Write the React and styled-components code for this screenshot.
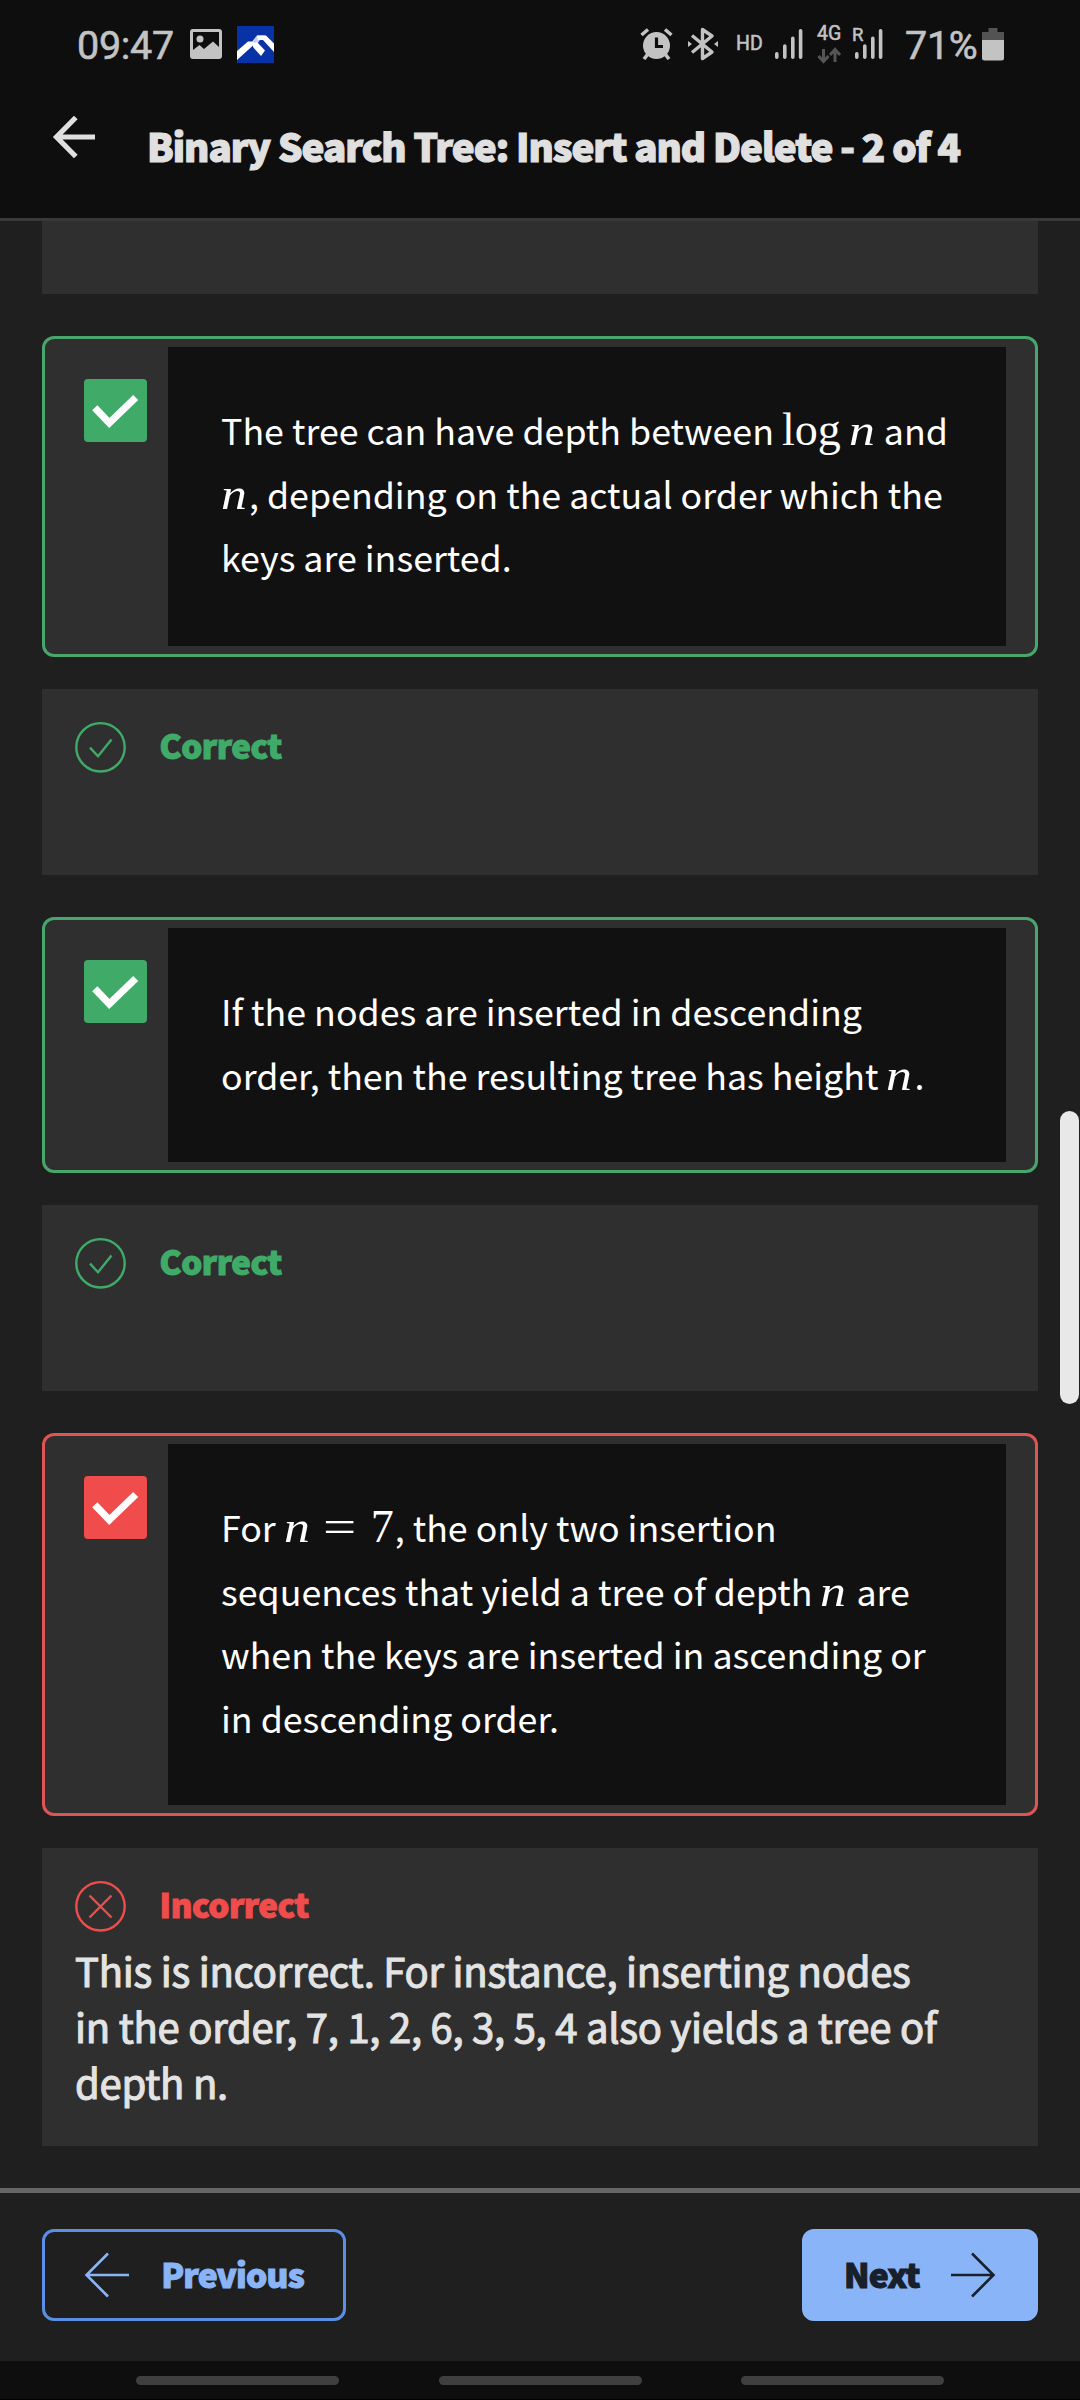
import React from "react";
import styled, { createGlobalStyle } from "styled-components";

const SANS = '"Noto Sans CJK SC", "Noto Sans", sans-serif';

const Global = createGlobalStyle`
  *, *::before, *::after { box-sizing: border-box; }
  html, body { margin: 0; background: #1f1f1f; }
  svg { display: block; flex: none; }
`;

const Screen = styled.div`
  position: relative;
  width: 1080px;
  height: 2400px;
  overflow: hidden;
  display: flex;
  flex-direction: column;
  background: #1f1f1f;
  font-family: ${SANS};
`;

const StatusBar = styled.div`
  height: 88px;
  flex: none;
  display: flex;
  align-items: center;
  justify-content: space-between;
  padding: 0 76px 0 77px;
  background: #0e0e0e;
  color: #c3c3c3;
  font: 400 39.5px/88px Roboto, sans-serif;
`;

const StatusGroup = styled.div`
  display: flex;
  align-items: center;
  height: 88px;
`;

const StatusText = styled.span`
  width: ${(p) => p.$w}px;
  white-space: nowrap;
  padding-top: ${(p) => p.$drop || 0}px;
  letter-spacing: -0.3px;
  -webkit-text-stroke: 0.6px currentColor;
`;

const SmallLabel = styled.span`
  width: ${(p) => p.$w}px;
  margin-left: ${(p) => p.$ml || 0}px;
  font-size: 19.5px;
  line-height: ${(p) => p.$lh || 86}px;
  white-space: nowrap;
  -webkit-text-stroke: 0.5px currentColor;
`;

const NetworkStack = styled.div`
  display: flex;
  flex-direction: column;
  align-items: center;
  width: 24px;
  margin-left: 14px;
`;

const SignalWrap = styled.div`
  position: relative;
  margin-left: ${(p) => p.$ml}px;
`;

const Roaming = styled.span`
  position: absolute;
  left: -3px;
  top: -5px;
  font-size: 18.5px;
  line-height: 22px;
  -webkit-text-stroke: 0.5px currentColor;
`;

const Gap = styled.span`
  width: ${(p) => p.$w}px;
  flex: none;
`;

const Header = styled.header`
  height: 133px;
  flex: none;
  display: flex;
  padding: 25px 0 0 51px;
  background: #0e0e0e;
  border-bottom: 3px solid #393939;
`;

const BackButton = styled.button`
  width: 96px;
  height: 48px;
  padding: 0;
  border: 0;
  background: none;
`;

const Title = styled.h1`
  margin: 2px 0 0;
  color: #e0e0e0;
  font: 900 38.5px/60px ${SANS};
  letter-spacing: -1px;
  -webkit-text-stroke: 1.2px currentColor;
  white-space: nowrap;
`;

const Content = styled.main`
  flex: none;
  height: 1967px;
  padding: 0 42px;
  display: flex;
  flex-direction: column;
`;

const Answer = styled.section`
  height: ${(p) => p.$h}px;
  flex: none;
  display: flex;
  padding: 8px 29px 8px 39px;
  background: #2f2f2f;
  border: 3px solid ${(p) => p.$line};
  border-radius: 12px;
`;

const CheckCell = styled.div`
  width: 84px;
  flex: none;
  padding-top: 32px;
`;

const CheckBox = styled.div`
  width: 63px;
  height: 63px;
  border-radius: 4px;
  background: ${(p) => p.$fill};
`;

const AnswerText = styled.p`
  flex: 1;
  margin: 0;
  padding: 51px 0 0 53px;
  background: #111;
  color: #fff;
  font: 400 35.75px/63.6px ${SANS};
  white-space: nowrap;
`;

const Line = styled.span`
  display: block;
`;

const MathText = styled.span`
  font-family: "Liberation Serif", serif;
  font-size: 46px;
  line-height: 0;
  margin-right: ${(p) => p.$mr || 0}px;
`;

const MathVar = styled(MathText)`
  display: inline-block;
  width: 27px;
  font-size: 45px;
  font-style: italic;
  transform: scaleX(1.15);
  transform-origin: left;
`;

const MathRelation = styled(MathText)`
  display: inline-block;
  width: 33px;
  transform: scaleX(1.28);
  transform-origin: left;
`;

const Feedback = styled.section`
  height: ${(p) => p.$h}px;
  flex: none;
  margin: ${(p) => p.$mt || 0}px 0 42px;
  padding: 32px;
  background: #2f2f2f;
`;

const Verdict = styled.div`
  display: flex;
  align-items: center;
  height: 52px;
  color: ${(p) => p.$c};
  font: 900 33px/52px ${SANS};
  letter-spacing: -0.4px;
`;

const VerdictLabel = styled.span`
  margin: -4px 0 0 33.6px;
  -webkit-text-stroke: 1.1px currentColor;
`;

const Explanation = styled.p`
  margin: 10px 0 0 1px;
  color: #e3e3e3;
  font: 400 40px/56px ${SANS};
  letter-spacing: -0.24px;
  -webkit-text-stroke: 1.1px currentColor;
  white-space: nowrap;
`;

const Footer = styled.footer`
  height: 173px;
  flex: none;
  display: flex;
  justify-content: space-between;
  padding: 36px 42px 0;
  border-top: 5px solid #666;
`;

const NavButton = styled.button`
  width: ${(p) => p.$w}px;
  height: 92px;
  display: flex;
  align-items: center;
  justify-content: space-between;
  padding: ${(p) => p.$pad};
  border: 3px solid ${(p) => p.$line};
  border-radius: 12px;
  background: ${(p) => p.$bg};
  color: ${(p) => p.$c};
  font: 900 33.5px/84px ${SANS};
  letter-spacing: -0.8px;
`;

const NavLabel = styled.span`
  margin-top: -2px;
  -webkit-text-stroke: 1.1px currentColor;
`;

const SystemNav = styled.nav`
  height: 39px;
  flex: none;
  display: flex;
  justify-content: center;
  gap: 99.5px;
  padding-top: 15px;
  background: #0e0e0e;
  border-bottom: 1px solid #000;
`;

const Pill = styled.span`
  width: 203px;
  height: 9px;
  border-radius: 5px;
  background: #3f3f3f;
`;

const ScrollThumb = styled.div`
  position: absolute;
  right: 1px;
  top: 1111px;
  width: 19px;
  height: 293px;
  border-radius: 10px;
  background: #e8e8e8;
`;

const GREEN = "#40ab68";
const RED = "#f04c4c";

const Bars = () => (
  <svg width="28" height="30" viewBox="0 0 28 30" stroke="#c3c3c3" strokeWidth="3.6" strokeLinecap="round">
    <path d="M1.8 24.8V28.2M9.8 17V28.2M17.8 9.2V28.2M25.6 1.8V28.2" />
  </svg>
);

const Tick = ({ color }) => (
  <CheckBox $fill={color}>
    <svg width="63" height="63" fill="none" stroke="#fff" strokeWidth="7.2">
      <path d="M10.8 28.8L25.3 44L51.7 18.5" />
    </svg>
  </CheckBox>
);

const Option = ({ h, color, line, children }) => (
  <Answer $h={h} $line={line}>
    <CheckCell>
      <Tick color={color} />
    </CheckCell>
    <AnswerText>{children}</AnswerText>
  </Answer>
);

const Result = ({ ok, children, ...rest }) => (
  <Feedback {...rest}>
    <Verdict $c={ok ? GREEN : RED}>
      <svg width="52" height="52" fill="none" stroke="currentColor" strokeWidth="2.4">
        <circle cx="26.5" cy="26.3" r="24.2" />
        {ok ? <path d="M16 26.6L24 35.2L37.5 18.5" /> : <path d="M15.5 15.5L37.5 37.5M37.5 15.5L15.5 37.5" />}
      </svg>
      <VerdictLabel>{ok ? "Correct" : "Incorrect"}</VerdictLabel>
    </Verdict>
    {children}
  </Feedback>
);

export default function App() {
  return (
    <Screen>
      <Global />
      <StatusBar>
        <StatusGroup>
          <StatusText $w={113} $drop={3}>09:47</StatusText>
          <svg width="32" height="30" viewBox="0 0 32 30">
            <path fillRule="evenodd" fill="#c3c3c3" d="M3 0H29Q32 0 32 3V27Q32 30 29 30H3Q0 30 0 27V3Q0 0 3 0ZM3 3V21L9.500 16L14 20L23 12.500L29 18V3Z" />
            <circle cx="10" cy="10" r="3.500" fill="#c3c3c3" />
          </svg>
          <Gap $w={15} />
          <svg width="37" height="37" viewBox="0 0 37 37">
            <rect width="37" height="37" fill="#0733a6" />
            <path d="M0 25L11 15.500H17L20 17L16 19.500L0 34Z" fill="#fff" />
            <path d="M15 15.500L20 9.500H28L23 14L20 18Z" fill="#c6d4f4" />
            <path d="M20 9.500H29L37 17.500V26L26 14H21Z" fill="#fff" />
            <path d="M16 18L20 16L28 24.500L24 30L16 21Z" fill="#fff" />
          </svg>
        </StatusGroup>
        <StatusGroup>
          <svg width="33" height="32" viewBox="0 0 33 32">
            <circle cx="16.500" cy="17.500" r="13.500" fill="#c3c3c3" />
            <path d="M1.500 7L8 1.500M31.500 7L25 1.500M7.500 26.500L4 31M25.500 26.500L29 31" stroke="#c3c3c3" strokeWidth="3.600" />
            <path d="M16.500 9.500V18.500H23" stroke="#0e0e0e" strokeWidth="3.200" fill="none" />
          </svg>
          <Gap $w={15} />
          <svg width="30" height="34" viewBox="0 0 30 34" fill="none" stroke="#c3c3c3" strokeWidth="3.400">
            <path d="M4 8.500L24 25L14.500 31.500V2.500L24 9L4 25.500" strokeLinejoin="round" />
            <path d="M0 14L4 17L0 20ZM30 14L26 17L30 20Z" fill="#c3c3c3" stroke="none" />
          </svg>
          <SmallLabel $w={26} $ml={18}>HD</SmallLabel>
          <SignalWrap $ml={13}><Bars /></SignalWrap>
          <NetworkStack>
            <SmallLabel $w={24} $lh={20}>4G</SmallLabel>
            <svg width="24" height="20" viewBox="0 0 24 20" fill="none" stroke="#555" strokeWidth="3">
              <path d="M6.500 5V17M1.500 12L6.500 17.500L11.500 12M18 18V6M13 11L18 5.500L23 11" />
            </svg>
          </NetworkStack>
          <SignalWrap $ml={14}><Roaming>R</Roaming><Bars /></SignalWrap>
          <Gap $w={22} />
          <StatusText $w={77} $drop={3}>71%</StatusText>
          <svg width="22" height="34" viewBox="0 0 22 34">
            <path d="M6.500 1H15.500V5H22V14H0V5H6.500Z" fill="#535353" />
            <path d="M0 13H22V31Q22 33.500 19.500 33.500H2.500Q0 33.500 0 31Z" fill="#c3c3c3" />
          </svg>
        </StatusGroup>
      </StatusBar>
      <Header>
        <BackButton aria-label="Back">
          <svg width="48" height="48" fill="none" stroke="#e0e0e0" strokeWidth="5.200">
            <path d="M44 24H6M24.800 4.500L5.500 24L24.800 43.500" />
          </svg>
        </BackButton>
        <Title>Binary Search Tree: Insert and Delete - 2 of 4</Title>
      </Header>
      <Content>
        <Feedback $h={73} />
        <Option h={321} color={GREEN} line="#48a66c">
          <Line>The tree can have depth between <MathText $mr={8}>log</MathText><MathVar>n</MathVar> and</Line>
          <Line><MathVar $mr={1}>n</MathVar>, depending on the actual order which the</Line>
          <Line>keys are inserted.</Line>
        </Option>
        <Result ok $h={186} $mt={32} />
        <Option h={256} color={GREEN} line="#48a66c">
          <Line>If the nodes are inserted in descending</Line>
          <Line>order, then the resulting tree has height <MathVar $mr={1}>n</MathVar>.</Line>
        </Option>
        <Result ok $h={186} $mt={32} />
        <Option h={383} color={RED} line="#de5555">
          <Line>For <MathVar $mr={12}>n</MathVar><MathRelation $mr={15}>=</MathRelation><MathText $mr={1}>7</MathText>, the only two insertion</Line>
          <Line>sequences that yield a tree of depth <MathVar $mr={1}>n</MathVar> are</Line>
          <Line>when the keys are inserted in ascending or</Line>
          <Line>in descending order.</Line>
        </Option>
        <Result $h={298} $mt={32}>
          <Explanation>
            <Line>This is incorrect. For instance, inserting nodes</Line>
            <Line>in the order, 7, 1, 2, 6, 3, 5, 4 also yields a tree of</Line>
            <Line>depth n.</Line>
          </Explanation>
        </Result>
      </Content>
      <Footer>
        <NavButton $w={304} $pad="0 39px 0 39px" $line="#5b8fe6" $bg="transparent" $c="#8ab4f8">
          <svg width="46" height="46" fill="none" stroke="currentColor" strokeWidth="2.600">
            <path d="M45 23H3M24 1.500L2.500 23L24 44.500" />
          </svg>
          <NavLabel>Previous</NavLabel>
        </NavButton>
        <NavButton $w={236} $pad="0 39px 0 39px" $line="#8ab4f8" $bg="#8ab4f8" $c="#17202b">
          <NavLabel>Next</NavLabel>
          <svg width="46" height="46" fill="none" stroke="currentColor" strokeWidth="2.600">
            <path d="M1 23H43M22 1.500L43.500 23L22 44.500" />
          </svg>
        </NavButton>
      </Footer>
      <SystemNav>
        <Pill />
        <Pill />
        <Pill />
      </SystemNav>
      <ScrollThumb />
    </Screen>
  );
}
